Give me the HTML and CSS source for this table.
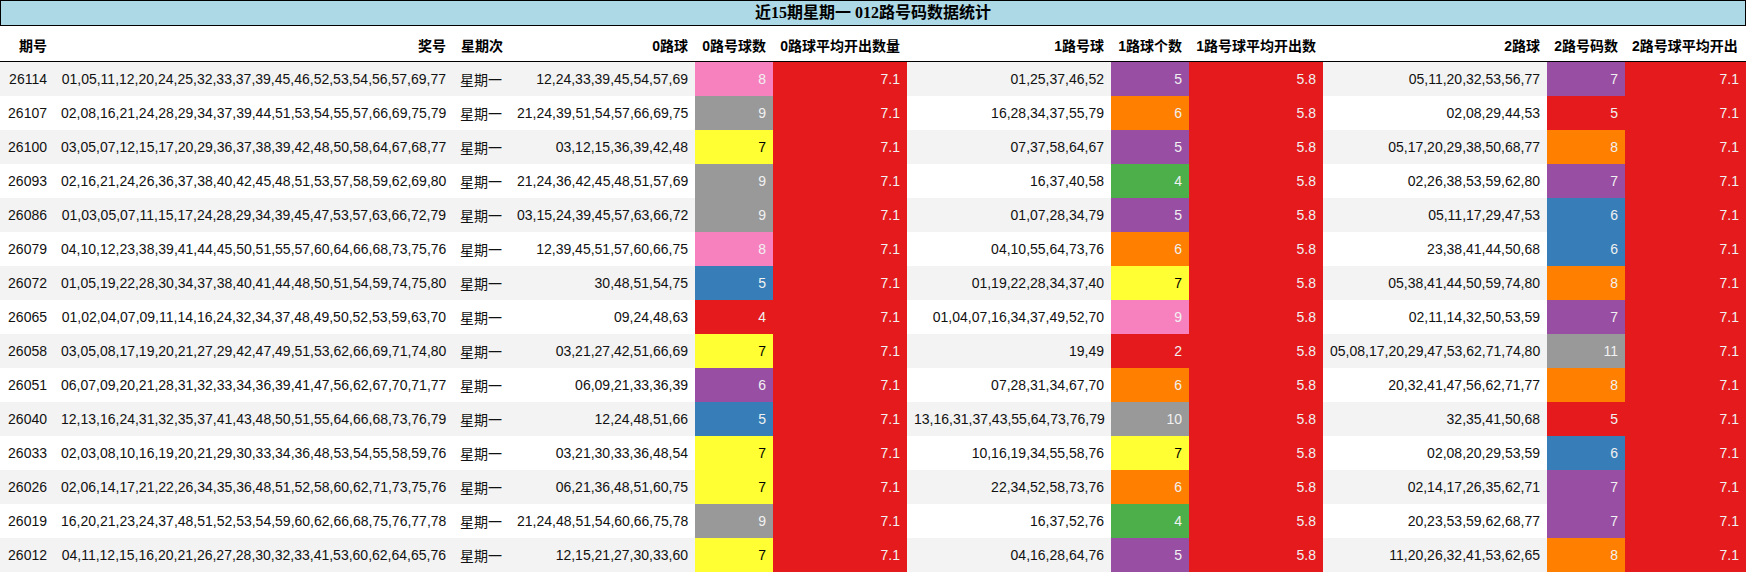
FILE: index.html
```html
<!DOCTYPE html>
<html lang="zh-CN">
<head>
<meta charset="utf-8">
<title>近15期星期一 012路号码数据统计</title>
<link rel="stylesheet" href="styles.css">
</head>
<body>
<div class="sheet">
  <div class="title">近15期星期一 012路号码数据统计</div>
  <table class="stats">
    <colgroup>
      <col class="w-issue"><col class="w-draw"><col class="w-week"><col class="w-r0">
      <col class="w-cnt"><col class="w-avg"><col class="w-r1"><col class="w-cnt">
      <col class="w-avg"><col class="w-r2"><col class="w-cnt"><col class="w-last">
    </colgroup>
    <thead>
      <tr>
        <th>期号</th><th>奖号</th><th>星期次</th><th>0路球</th><th>0路号球数</th><th>0路球平均开出数量</th>
        <th>1路号球</th><th>1路球个数</th><th>1路号球平均开出数</th><th>2路球</th><th>2路号码数</th>
        <th class="clip"><span>2路号球平均开出数量</span></th>
      </tr>
    </thead>
    <tbody>
      <tr><td>26114</td><td>01,05,11,12,20,24,25,32,33,37,39,45,46,52,53,54,56,57,69,77</td><td class="week">星期一</td><td>12,24,33,39,45,54,57,69</td><td class="pink">8</td><td class="red">7.1</td><td>01,25,37,46,52</td><td class="purple">5</td><td class="red">5.8</td><td>05,11,20,32,53,56,77</td><td class="purple">7</td><td class="red">7.1</td></tr>
      <tr><td>26107</td><td>02,08,16,21,24,28,29,34,37,39,44,51,53,54,55,57,66,69,75,79</td><td class="week">星期一</td><td>21,24,39,51,54,57,66,69,75</td><td class="gray">9</td><td class="red">7.1</td><td>16,28,34,37,55,79</td><td class="orange">6</td><td class="red">5.8</td><td>02,08,29,44,53</td><td class="red">5</td><td class="red">7.1</td></tr>
      <tr><td>26100</td><td>03,05,07,12,15,17,20,29,36,37,38,39,42,48,50,58,64,67,68,77</td><td class="week">星期一</td><td>03,12,15,36,39,42,48</td><td class="yellow">7</td><td class="red">7.1</td><td>07,37,58,64,67</td><td class="purple">5</td><td class="red">5.8</td><td>05,17,20,29,38,50,68,77</td><td class="orange">8</td><td class="red">7.1</td></tr>
      <tr><td>26093</td><td>02,16,21,24,26,36,37,38,40,42,45,48,51,53,57,58,59,62,69,80</td><td class="week">星期一</td><td>21,24,36,42,45,48,51,57,69</td><td class="gray">9</td><td class="red">7.1</td><td>16,37,40,58</td><td class="green">4</td><td class="red">5.8</td><td>02,26,38,53,59,62,80</td><td class="purple">7</td><td class="red">7.1</td></tr>
      <tr><td>26086</td><td>01,03,05,07,11,15,17,24,28,29,34,39,45,47,53,57,63,66,72,79</td><td class="week">星期一</td><td>03,15,24,39,45,57,63,66,72</td><td class="gray">9</td><td class="red">7.1</td><td>01,07,28,34,79</td><td class="purple">5</td><td class="red">5.8</td><td>05,11,17,29,47,53</td><td class="blue">6</td><td class="red">7.1</td></tr>
      <tr><td>26079</td><td>04,10,12,23,38,39,41,44,45,50,51,55,57,60,64,66,68,73,75,76</td><td class="week">星期一</td><td>12,39,45,51,57,60,66,75</td><td class="pink">8</td><td class="red">7.1</td><td>04,10,55,64,73,76</td><td class="orange">6</td><td class="red">5.8</td><td>23,38,41,44,50,68</td><td class="blue">6</td><td class="red">7.1</td></tr>
      <tr><td>26072</td><td>01,05,19,22,28,30,34,37,38,40,41,44,48,50,51,54,59,74,75,80</td><td class="week">星期一</td><td>30,48,51,54,75</td><td class="blue">5</td><td class="red">7.1</td><td>01,19,22,28,34,37,40</td><td class="yellow">7</td><td class="red">5.8</td><td>05,38,41,44,50,59,74,80</td><td class="orange">8</td><td class="red">7.1</td></tr>
      <tr><td>26065</td><td>01,02,04,07,09,11,14,16,24,32,34,37,48,49,50,52,53,59,63,70</td><td class="week">星期一</td><td>09,24,48,63</td><td class="red">4</td><td class="red">7.1</td><td>01,04,07,16,34,37,49,52,70</td><td class="pink">9</td><td class="red">5.8</td><td>02,11,14,32,50,53,59</td><td class="purple">7</td><td class="red">7.1</td></tr>
      <tr><td>26058</td><td>03,05,08,17,19,20,21,27,29,42,47,49,51,53,62,66,69,71,74,80</td><td class="week">星期一</td><td>03,21,27,42,51,66,69</td><td class="yellow">7</td><td class="red">7.1</td><td>19,49</td><td class="red">2</td><td class="red">5.8</td><td>05,08,17,20,29,47,53,62,71,74,80</td><td class="gray">11</td><td class="red">7.1</td></tr>
      <tr><td>26051</td><td>06,07,09,20,21,28,31,32,33,34,36,39,41,47,56,62,67,70,71,77</td><td class="week">星期一</td><td>06,09,21,33,36,39</td><td class="purple">6</td><td class="red">7.1</td><td>07,28,31,34,67,70</td><td class="orange">6</td><td class="red">5.8</td><td>20,32,41,47,56,62,71,77</td><td class="orange">8</td><td class="red">7.1</td></tr>
      <tr><td>26040</td><td>12,13,16,24,31,32,35,37,41,43,48,50,51,55,64,66,68,73,76,79</td><td class="week">星期一</td><td>12,24,48,51,66</td><td class="blue">5</td><td class="red">7.1</td><td>13,16,31,37,43,55,64,73,76,79</td><td class="gray">10</td><td class="red">5.8</td><td>32,35,41,50,68</td><td class="red">5</td><td class="red">7.1</td></tr>
      <tr><td>26033</td><td>02,03,08,10,16,19,20,21,29,30,33,34,36,48,53,54,55,58,59,76</td><td class="week">星期一</td><td>03,21,30,33,36,48,54</td><td class="yellow">7</td><td class="red">7.1</td><td>10,16,19,34,55,58,76</td><td class="yellow">7</td><td class="red">5.8</td><td>02,08,20,29,53,59</td><td class="blue">6</td><td class="red">7.1</td></tr>
      <tr><td>26026</td><td>02,06,14,17,21,22,26,34,35,36,48,51,52,58,60,62,71,73,75,76</td><td class="week">星期一</td><td>06,21,36,48,51,60,75</td><td class="yellow">7</td><td class="red">7.1</td><td>22,34,52,58,73,76</td><td class="orange">6</td><td class="red">5.8</td><td>02,14,17,26,35,62,71</td><td class="purple">7</td><td class="red">7.1</td></tr>
      <tr><td>26019</td><td>16,20,21,23,24,37,48,51,52,53,54,59,60,62,66,68,75,76,77,78</td><td class="week">星期一</td><td>21,24,48,51,54,60,66,75,78</td><td class="gray">9</td><td class="red">7.1</td><td>16,37,52,76</td><td class="green">4</td><td class="red">5.8</td><td>20,23,53,59,62,68,77</td><td class="purple">7</td><td class="red">7.1</td></tr>
      <tr><td>26012</td><td>04,11,12,15,16,20,21,26,27,28,30,32,33,41,53,60,62,64,65,76</td><td class="week">星期一</td><td>12,15,21,27,30,33,60</td><td class="yellow">7</td><td class="red">7.1</td><td>04,16,28,64,76</td><td class="purple">5</td><td class="red">5.8</td><td>11,20,26,32,41,53,62,65</td><td class="orange">8</td><td class="red">7.1</td></tr>
    </tbody>
  </table>
</div>
</body>
</html>
```

FILE: styles.css
```css
html, body {
  margin: 0;
  padding: 0;
  background: #ffffff;
}

.sheet {
  width: 1746px;
  overflow: hidden;
}

.title {
  box-sizing: border-box;
  width: 1746px;
  height: 26px;
  border: 1px solid #000000;
  background: #add8e6;
  color: #000000;
  text-align: center;
  font-family: "Liberation Serif", "Noto Sans CJK SC", serif;
  font-weight: bold;
  font-size: 16px;
  line-height: 24px;
}

.stats {
  width: 1746px;
  table-layout: fixed;
  border-collapse: separate;
  border-spacing: 0;
  font-family: "Liberation Sans", "Noto Sans CJK SC", sans-serif;
  font-size: 14px;
  color: #111111;
}

.w-issue { width: 54px; }
.w-draw { width: 399px; }
.w-week { width: 57px; }
.w-r0 { width: 185px; }
.w-cnt { width: 78px; }
.w-avg { width: 134px; }
.w-r1 { width: 204px; }
.w-r2 { width: 224px; }
.w-last { width: 121px; }

.stats th {
  box-sizing: border-box;
  height: 36px;
  padding: 3px 7px 0 7px;
  border-bottom: 1px solid #000000;
  text-align: right;
  font-weight: bold;
  color: #000000;
  white-space: nowrap;
}

.stats th.clip {
  text-align: left;
}

.stats th.clip span {
  display: block;
  width: 106px;
  overflow: hidden;
  white-space: nowrap;
}

.stats td {
  box-sizing: border-box;
  height: 34px;
  padding: 0 7px;
  text-align: right;
  white-space: nowrap;
  overflow: hidden;
}

.stats td.week {
  text-align: left;
}

.stats tbody tr:nth-child(odd) td {
  background: #f3f3f3;
}

.stats tbody tr td.red { background: #e41a1c; color: #f1f1f1; }
.stats tbody tr td.blue { background: #377eb8; color: #f1f1f1; }
.stats tbody tr td.green { background: #4daf4a; color: #f1f1f1; }
.stats tbody tr td.purple { background: #984ea3; color: #f1f1f1; }
.stats tbody tr td.orange { background: #ff7f00; color: #f1f1f1; }
.stats tbody tr td.yellow { background: #ffff33; color: #000000; }
.stats tbody tr td.pink { background: #f781bf; color: #f1f1f1; }
.stats tbody tr td.gray { background: #999999; color: #f1f1f1; }
```
